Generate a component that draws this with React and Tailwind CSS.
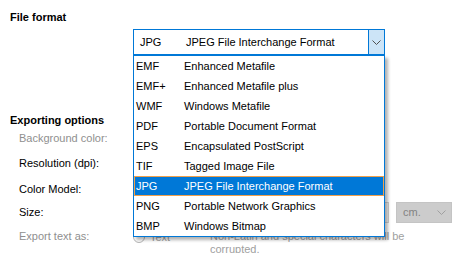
import React from "react";

const items = [
  ["EMF", "Enhanced Metafile"],
  ["EMF+", "Enhanced Metafile plus"],
  ["WMF", "Windows Metafile"],
  ["PDF", "Portable Document Format"],
  ["EPS", "Encapsulated PostScript"],
  ["TIF", "Tagged Image File"],
  ["JPG", "JPEG File Interchange Format"],
  ["PNG", "Portable Network Graphics"],
  ["BMP", "Windows Bitmap"],
];

function Chevron({ color = "#505050" }) {
  return (
    <svg width="9" height="5" viewBox="0 0 9 5">
      <polyline points="0.5,0.5 4.5,4.5 8.5,0.5" fill="none" stroke={color} strokeWidth="1" />
    </svg>
  );
}

export default function App() {
  return (
    <div
      className="relative w-[452px] h-[253px] overflow-hidden bg-white text-[11px] text-black"
      style={{ fontFamily: '"Liberation Sans", Arial, sans-serif' }}
    >
      <div className="pt-[10px] pl-[10px] leading-[14px] font-bold">File format</div>

      <div className="mt-[5px] ml-[133px] w-[252px] h-[26px] border border-[#0078d7] flex items-center">
        <span className="pl-[6px] w-[52px]">JPG</span>
        <span>JPEG File Interchange Format</span>
        <div className="ml-auto h-full w-[16px] bg-[#cce4f7] border-l border-[#0078d7] flex items-center justify-center">
          <Chevron />
        </div>
      </div>

      <div className="mt-[58px] pl-[10px] leading-[14px] font-bold">Exporting options</div>

      <div className="grid grid-cols-[133px_1fr]">
        <div className="h-[22px] pl-[19px] flex items-center text-[#8f8f8f]">Background color:</div>
        <div className="h-[22px]" />

        <div className="h-[28px] pl-[19px] flex items-center">Resolution (dpi):</div>
        <div className="h-[28px] flex items-center">
          <div className="w-[100px] h-[20px] border border-[#7a7a7a]" />
        </div>

        <div className="h-[24px] pl-[19px] flex items-center">Color Model:</div>
        <div className="h-[24px] flex items-center">
          <div className="w-[150px] h-[20px] border border-[#7a7a7a]" />
        </div>

        <div className="h-[23px] pl-[19px] flex items-center">Size:</div>
        <div className="h-[23px] flex items-center">
          <div className="w-[256px] h-[21px] border border-[#d0d0d0] bg-[#f0f0f0]" />
          <div className="ml-[7px] w-[56px] h-[21px] border border-[#c4c4c4] bg-[#cccccc] flex items-center pl-[6px] text-[#838383]">
            <span>cm.</span>
            <span className="ml-auto mr-[5px] flex"><Chevron color="#a0a0a0" /></span>
          </div>
        </div>

        <div className="pt-[6px] pl-[19px] leading-[13px] text-[#8f8f8f]">Export text as:</div>
        <div className="pt-[6px] leading-[13px] flex text-[#a0a0a0]">
          <div className="flex items-start w-[77px] pt-[1px]">
            <span className="w-[12px] h-[12px] rounded-full border border-[#b5b5b5] mr-[5px]" />
            <span>Text</span>
          </div>
          <div>
            <div>Non-Latin and special characters will be</div>
            <div>corrupted.</div>
          </div>
        </div>
      </div>

      <div className="absolute left-[133px] top-[55px] w-[252px] h-[182px] bg-white border border-[#0078d7] shadow-[3px_3px_3px_rgba(0,0,0,0.3)]">
        {items.map(([code, desc]) => {
          const sel = code === "JPG";
          return (
            <div
              key={code}
              className={
                sel
                  ? "h-[20px] flex items-center bg-[#0078d7] text-white border border-[#f0a04b]"
                  : "h-[20px] flex items-center border border-transparent"
              }
            >
              <span className="pl-[1px] w-[49px]">{code}</span>
              <span>{desc}</span>
            </div>
          );
        })}
      </div>
    </div>
  );
}
